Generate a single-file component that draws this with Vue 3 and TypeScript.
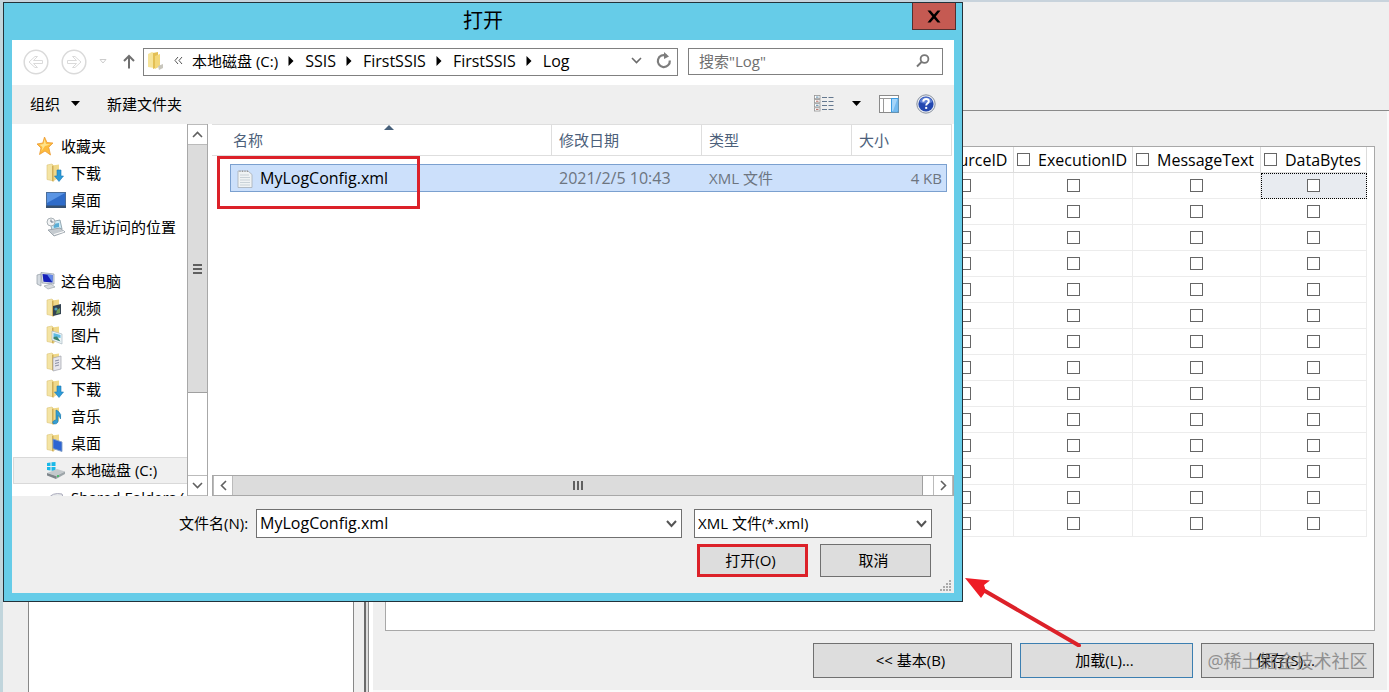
<script setup lang="ts">
import { ref } from 'vue'

interface NavItem {
  label: string
  icon: string
  root?: boolean
  spaced?: boolean
  selected?: boolean
}

const navItems: NavItem[] = [
  { label: '收藏夹', icon: 'star', root: true },
  { label: '下载', icon: 'download' },
  { label: '桌面', icon: 'desktop' },
  { label: '最近访问的位置', icon: 'recent' },
  { label: '这台电脑', icon: 'pc', root: true, spaced: true },
  { label: '视频', icon: 'video' },
  { label: '图片', icon: 'picture' },
  { label: '文档', icon: 'document' },
  { label: '下载', icon: 'download' },
  { label: '音乐', icon: 'music' },
  { label: '桌面', icon: 'deskfolder' },
  { label: '本地磁盘 (C:)', icon: 'drive', selected: true },
  { label: 'Shared Folders (', icon: 'net' },
]
const folderIcons = ['download', 'video', 'picture', 'document', 'music', 'deskfolder']

const crumbs: string[] = ['本地磁盘 (C:)', 'SSIS', 'FirstSSIS', 'FirstSSIS', 'Log']
const logColumns: string[] = ['SourceID', 'ExecutionID', 'MessageText', 'DataBytes']
const logRows = 14

const fileName = ref('MyLogConfig.xml')
const search = ref('')
</script>

<template>
  <div class="screen">
    <main class="host">
      <header class="host-head"></header>
      <div class="host-body">
        <section class="tree"><div class="tree-box"></div></section>
        <div class="splitter"></div>
        <section class="details">
          <div class="grid-frame">
            <table class="log">
              <colgroup>
                <col class="c1" /><col class="c2" /><col class="c3" /><col class="c4" />
              </colgroup>
              <thead>
                <tr>
                  <th v-for="c in logColumns" :key="c">
                    <label><input type="checkbox" class="tick" /><span>{{ c }}</span></label>
                  </th>
                </tr>
              </thead>
              <tbody>
                <tr v-for="r in logRows" :key="r">
                  <td v-for="(c, i) in logColumns" :key="c" :class="{ current: r === 1 && i === 3 }">
                    <input type="checkbox" class="tick" :aria-label="c" />
                  </td>
                </tr>
              </tbody>
            </table>
          </div>
          <div class="actions">
            <button class="btn basic">&lt;&lt; 基本(B)</button>
            <button class="btn load">
              加载(L)...
              <svg class="arrow" width="120" height="76" viewBox="0 0 120 76">
                <path d="M23 20L117 74.500" stroke="#dc2129" stroke-width="4" stroke-linecap="round" />
                <path d="M3 7L28 9.500L22 14L24 20L19 27Z" fill="#ee1c25" />
              </svg>
            </button>
            <button class="btn save">保存(S)...<span class="mark">@稀土掘金技术社区</span></button>
          </div>
        </section>
      </div>
    </main>

    <section class="dialog" role="dialog" aria-labelledby="dlg-title">
      <header class="title">
        <h1 id="dlg-title">打开</h1>
        <button class="close" aria-label="关闭">
          <svg width="14" height="13" viewBox="0 0 14 13">
            <path d="M0.500 0.500H3.500L7 4.500L10.500 0.500H13.500L8.700 6.500L13.500 12.500H10.500L7 8.500L3.500 12.500H0.500L5.300 6.500Z" fill="#000" />
          </svg>
        </button>
      </header>

      <div class="client">
        <div class="nav-row">
          <button class="round" aria-label="后退">
            <svg width="26" height="26" viewBox="0 0 26 26" fill="none" stroke="#dadada">
              <circle cx="13" cy="13" r="11.800" stroke-width="1.500" />
              <path d="M6 13L12 7.500H14.500L10.500 11.500H19.500V14.500H10.500L14.500 18.500H12Z" />
            </svg>
          </button>
          <button class="round fwd" aria-label="前进">
            <svg width="26" height="26" viewBox="0 0 26 26" fill="none" stroke="#dadada">
              <circle cx="13" cy="13" r="11.800" stroke-width="1.500" />
              <path d="M20 13L14 7.500H11.500L15.500 11.500H6.500V14.500H15.500L11.500 18.500H14Z" />
            </svg>
          </button>
          <button class="hist" aria-label="最近的位置">
            <svg width="8" height="5" viewBox="0 0 8 5"><path d="M1 .5H7L4 4Z" fill="#fff" stroke="#ccc" /></svg>
          </button>
          <button class="up" aria-label="向上">
            <svg width="12" height="15" viewBox="0 0 12 15" fill="none" stroke="#707070" stroke-width="2">
              <path d="M6 14.500V2M1 7L6 2L11 7" />
            </svg>
          </button>
          <div class="address">
            <svg class="folder" width="18" height="20" viewBox="0 0 18 20">
              <path d="M1 3L5 1L7 2V17L1 16Z" fill="#f6e49a" />
              <path d="M6 2L11 1V16L6 18Z" fill="#e3bf54" />
              <path d="M8 5L13 3V15L8 18Z" fill="#f3d779" />
              <path d="M11 15L16 13V17L12 19Z" fill="#c8c6bd" />
            </svg>
            <svg class="more" width="9" height="9" viewBox="0 0 9 9" fill="none" stroke="#555">
              <path d="M4 1L1 4.500L4 8M8 1L5 4.500L8 8" />
            </svg>
            <template v-for="(c, i) in crumbs" :key="i">
              <svg v-if="i > 0" class="sep" width="6" height="10" viewBox="0 0 6 10"><path d="M.5 0L5.500 5L.5 10Z" /></svg>
              <a href="#" :class="{ latin: i > 0 }">{{ c }}</a>
            </template>
            <span class="grow"></span>
            <svg class="drop" width="11" height="7" viewBox="0 0 11 7" fill="none" stroke="#6b6b6b" stroke-width="1.600"><path d="M1 1L5.500 5.500L10 1" /></svg>
            <button class="refresh" aria-label="刷新">
              <svg width="16" height="17" viewBox="0 0 16 17" fill="none">
                <path d="M10.500 3.700A6 6 0 1 0 13.800 8.500" stroke="#7d7d7d" stroke-width="2.200" />
                <path d="M8 0V7L13 4.500Z" fill="#7d7d7d" />
              </svg>
            </button>
          </div>
          <label class="search">
            <input v-model="search" type="text" placeholder='搜索"Log"' aria-label="搜索" />
            <svg width="14" height="14" viewBox="0 0 14 14" fill="none" stroke="#777" stroke-width="2">
              <circle cx="8.500" cy="5" r="3.900" stroke-width="1.800" /><path d="M5.500 8L1 12.500" />
            </svg>
          </label>
        </div>

        <div class="toolbar">
          <button class="tool">组织<svg width="9" height="5" viewBox="0 0 9 5"><path d="M0 0H9L4.500 5Z" /></svg></button>
          <button class="tool">新建文件夹</button>
          <span class="grow"></span>
          <button class="tool" aria-label="更改视图">
            <svg width="20" height="17" viewBox="0 0 20 17">
              <g fill="#fff" stroke="#949494" stroke-width=".8">
                <rect x=".5" y=".5" width="5.500" height="3.200" /><rect x=".5" y="4.600" width="5.500" height="3.200" />
                <rect x=".5" y="8.700" width="5.500" height="3.200" /><rect x=".5" y="12.800" width="5.500" height="3.200" />
              </g>
              <path d="M2 2.100H4.500M2 10.300H4.500" stroke="#5b8aa8" /><path d="M2 6.200H4.500M2 14.400H4.500" stroke="#b46a60" />
              <path d="M8 2.500H13M14.500 2.500H19.500M8 6.500H13M14.500 6.500H19.500M8 10.500H13M14.500 10.500H19.500M8 14.500H13M14.500 14.500H19.500" stroke="#64788f" />
            </svg>
          </button>
          <button class="tool view-drop" aria-label="视图选项"><svg width="9" height="5" viewBox="0 0 9 5"><path d="M0 0H9L4.500 5Z" /></svg></button>
          <button class="tool pane" aria-label="预览窗格">
            <svg width="20" height="18" viewBox="0 0 20 18">
              <rect x=".5" y=".5" width="19" height="17" fill="#fff" stroke="#8a8a8a" />
              <path d="M1 3.500H19M4.500 3.500V17" stroke="#9a9a9a" />
              <rect x="12.500" y="3.500" width="6.500" height="13.500" fill="#a5d5fa" stroke="#3c9be0" />
              <path d="M14 16L18 5V16Z" fill="#74baf0" />
            </svg>
          </button>
          <button class="tool" aria-label="帮助">
            <svg width="20" height="20" viewBox="0 0 20 20">
              <circle cx="10" cy="10" r="9.200" fill="#e4e8ef" stroke="#8b93a0" />
              <circle cx="10" cy="10" r="7.600" fill="#2448b0" />
              <path d="M3.500 8A6.800 6.800 0 0 1 16.500 8Q10 11 3.500 8Z" fill="#5f80d6" />
              <path d="M7.200 7.600Q7.400 5 10.100 5Q12.800 5 12.800 7.300Q12.800 8.700 11.300 9.500Q10.200 10.200 10.200 11.500" fill="none" stroke="#fff" stroke-width="2" />
              <rect x="9.200" y="12.900" width="2" height="2" fill="#fff" />
            </svg>
          </button>
        </div>

        <div class="panes">
          <nav class="side">
            <ul>
              <li v-for="(n, i) in navItems" :key="i" :class="{ root: n.root, spaced: n.spaced, selected: n.selected }">
                <svg width="20" height="20" viewBox="0 0 20 20">
                  <g v-if="folderIcons.includes(n.icon)">
                    <path d="M1 2L6 1L8 3V18L1 16.500Z" fill="#f4e4a4" stroke="#dcc578" stroke-width=".6" />
                    <path d="M6 2.500L13 1.500V15L6 18.500Z" fill="#f0d888" />
                    <path d="M6 2.500L7.500 3V18.500L6 18Z" fill="#cfae58" />
                  </g>
                  <path v-if="n.icon === 'star'" d="M8.500 1L11 6.500L17 7L12.700 11.300L14.500 19L9 15L3.500 18.500L5 12L1 8L6.800 7Z" fill="#fdbb3c" stroke="#eb9a35" stroke-width=".8" />
                  <path v-if="n.icon === 'star'" d="M8.500 3L10 8L14.500 8.500L9 10L5.500 15L6.500 11L3.500 8.700L7.500 8Z" fill="#ffe48c" />
                  <path v-if="n.icon === 'download'" d="M11 7H15V13H17.500L13 18.500L8.500 13H11Z" fill="#2c9bd8" stroke="#1d78b4" stroke-width=".6" />
                  <g v-if="n.icon === 'desktop'">
                    <rect x=".5" y="2.500" width="19" height="15" fill="#2f6cc9" stroke="#4a6d9a" />
                    <path d="M1 3H19L1 13Z" fill="#5b95e4" /><rect x="0" y="15.500" width="20" height="2.500" fill="#36506f" />
                  </g>
                  <g v-if="n.icon === 'recent'">
                    <path d="M4 5L14 3L16 12L6 13Z" fill="#cdeaf5" stroke="#98aab4" />
                    <path d="M7 7L13 6L13 10L8 11Z" fill="#58acd4" />
                    <circle cx="5" cy="5" r="4" fill="#f2f4f5" stroke="#a9b1b6" /><path d="M5 2.500V5H7.500" fill="none" stroke="#678" />
                    <path d="M2 13L14 11L19 15L8 19Z" fill="#c5cbd0" stroke="#87919a" stroke-width=".7" /><path d="M8 17.500L18 14.500" stroke="#fff" />
                  </g>
                  <g v-if="n.icon === 'pc'">
                    <path d="M1 4L5 3V15L1 13Z" fill="#d5dbe1" stroke="#929ca5" stroke-width=".7" />
                    <path d="M5 1.500L18 3V13L6 12Z" fill="#dbe0e6" stroke="#8b97a4" stroke-width=".7" />
                    <path d="M6.500 3L16.500 4V11.500L7.500 10.800Z" fill="#1520b9" /><path d="M11 3.500L16.500 4V11.500Z" fill="#628aea" />
                    <path d="M8 15L15 13L19 16L12 18Z" fill="#d8dcdf" stroke="#9fa7ad" stroke-width=".7" />
                  </g>
                  <g v-if="n.icon === 'video'">
                    <path d="M7 8L15 6V16L7 18Z" fill="#334351" /><circle cx="10" cy="11" r="1.600" fill="#4ca3bd" /><path d="M11 12L14 10V15L10 16Z" fill="#729c58" />
                  </g>
                  <g v-if="n.icon === 'picture'">
                    <path d="M6 6L16 9V19L6 15Z" fill="#edf5f8" stroke="#a9b9c1" stroke-width=".7" /><path d="M7.500 8L14.500 10V13L7.500 12Z" fill="#5dbbe3" /><path d="M7.500 12L11 11.500L14.500 16.500L7.500 14Z" fill="#39846f" />
                  </g>
                  <g v-if="n.icon === 'document'">
                    <path d="M7 6L15 4V17L7 19Z" fill="#e7e6eb" stroke="#9fa1aa" stroke-width=".7" /><path d="M9 9L13 8M9 11.500L13 10.500M9 14L13 13" stroke="#8a8fa2" />
                  </g>
                  <path v-if="n.icon === 'music'" d="M10 4L12 5Q16 8 14.500 13Q14 11 12 9.500V16Q11 18.500 7.500 18Q5.500 16 8 14.500L10 14Z" fill="#369ed2" stroke="#1d79ac" stroke-width=".6" />
                  <path v-if="n.icon === 'deskfolder'" d="M7 6L16 9V18.500L7 15.500Z" fill="#2e65d2" stroke="#849fc6" stroke-width=".9" />
                  <g v-if="n.icon === 'drive'">
                    <path d="M1 3L4.500 2.500V6H1ZM5.500 2.300L9.500 2V6H5.500ZM1 7H4.500V10.500L1 10ZM5.500 7H9.500V11L5.500 10.700Z" fill="#19b8e8" />
                    <path d="M1 13L11 9L19 11.500L10 16Z" fill="#c4c9cc" /><path d="M1 13L10 16V19L1 15.500Z" fill="#7d858a" /><path d="M10 16L19 11.500V14L10 19Z" fill="#9da5a9" /><circle cx="12" cy="16" r="1" fill="#39c15b" />
                  </g>
                  <path v-if="n.icon === 'net'" d="M2 12Q6 5 16 7Q18 10 16 14H3Z" fill="#e9ebec" stroke="#aab" />
                </svg>
                <span>{{ n.label }}</span>
              </li>
            </ul>
          </nav>
          <div class="vscroll">
            <button aria-label="向上滚动"><svg width="11" height="7" viewBox="0 0 11 7"><path d="M1 6L5.500 1.500L10 6" /></svg></button>
            <div class="vthumb"><i></i><i></i><i></i></div>
            <span class="grow"></span>
            <button aria-label="向下滚动"><svg width="11" height="7" viewBox="0 0 11 7"><path d="M1 1L5.500 5.500L10 1" /></svg></button>
          </div>

          <div class="list">
            <svg class="sort" width="10" height="5" viewBox="0 0 10 5"><path d="M0 5L5 0L10 5Z" fill="#47607a" /></svg>
            <table class="files">
              <colgroup><col /><col class="f2" /><col class="f2" /><col class="f3" /></colgroup>
              <thead>
                <tr><th>名称</th><th>修改日期</th><th>类型</th><th>大小</th></tr>
              </thead>
            </table>
            <table class="files rows">
              <colgroup><col /><col class="f2" /><col class="f2" /><col class="f4" /></colgroup>
              <tbody>
                <tr>
                  <td>
                    <span class="file latin">
                      <svg width="16" height="19" viewBox="0 0 16 19">
                        <path d="M1 2H11L15 5.500V18.500H1Z" fill="#f0f3f4" stroke="#a7afb8" stroke-width=".8" />
                        <path d="M3 1.500V3M5.500 1.500V3M8 1.500V3M10.500 1.500V3" stroke="#999" />
                        <path d="M3 6H12M3 8.500H13M3 11H13M3 13.500H13M3 16H13" stroke="#c9d2d8" />
                      </svg>MyLogConfig.xml
                    </span>
                  </td>
                  <td class="latin">2021/2/5 10:43</td>
                  <td>XML 文件</td>
                  <td>4 KB</td>
                </tr>
              </tbody>
            </table>
            <div class="callout"></div>
            <span class="grow"></span>
            <div class="hscroll">
              <button aria-label="向左滚动"><svg width="7" height="11" viewBox="0 0 7 11"><path d="M6 1L1.500 5.500L6 10" /></svg></button>
              <div class="hthumb"><i></i><i></i><i></i></div>
              <button aria-label="向右滚动"><svg width="7" height="11" viewBox="0 0 7 11"><path d="M1 1L5.500 5.500L1 10" /></svg></button>
            </div>
          </div>
        </div>

        <form class="foot" @submit.prevent>
          <div class="fields">
            <label for="fname">文件名(N):</label>
            <div class="combo name latin">
              <input id="fname" v-model="fileName" type="text" />
              <svg width="11" height="8" viewBox="0 0 11 8"><path d="M1 1L5.500 6L10 1" /></svg>
            </div>
            <div class="combo type">
              <select aria-label="文件类型"><option>XML 文件(*.xml)</option></select>
              <svg width="11" height="8" viewBox="0 0 11 8"><path d="M1 1L5.500 6L10 1" /></svg>
            </div>
          </div>
          <div class="choices">
            <button class="btn open" type="submit">打开(O)</button>
            <button class="btn" type="button">取消</button>
          </div>
          <svg class="grip" width="12" height="12" viewBox="0 0 12 12" fill="#aaa">
            <path d="M9 0h2v2h-2zM6 3h2v2h-2zM9 3h2v2h-2zM3 6h2v2h-2zM6 6h2v2h-2zM9 6h2v2h-2zM0 9h2v2h-2zM3 9h2v2h-2zM6 9h2v2h-2zM9 9h2v2h-2z" />
          </svg>
        </form>
      </div>
    </section>
  </div>
</template>

<style>
body { margin: 0; }
</style>

<style scoped>
* { box-sizing: border-box; }
.screen {
  position: relative;
  min-height: 100vh;
  display: flex;
  overflow: hidden;
  color: #000;
  font: 15px/20px "Open Sans", "Noto Sans CJK SC", sans-serif;
}
button, input, select { font: inherit; color: inherit; margin: 0; }
button { padding: 0; border: 0; background: none; }
svg { flex: none; display: block; }
ul { list-style: none; margin: 0; padding: 0; }
.grow { flex: 1; }
.latin { font-size: 16px; }

.host {
  flex: 1;
  display: flex;
  flex-direction: column;
  border-left: 3px solid #c1d5dc;
  border-top: 2px solid #c8d3dc;
  background: #efefef;
}
.host-head { height: 109px; border-bottom: 1px solid #8a8a8a; }
.host-body { flex: 1; display: grid; grid-template-columns: 361px 9px 1fr; }
.tree { display: flex; padding: 0 10px 0 25px; }
.tree-box { flex: 1; background: #fff; border: solid #888; border-width: 0 1px; }
.splitter { border-left: 2px solid #6b6b6b; border-right: 4px solid #fff; background: linear-gradient(90deg, #ddd 2px, #888 2px); }
.details {
  display: flex;
  flex-direction: column;
  gap: 12px;
  padding: 35px 12px 12px;
  border-right: 2px solid #fafafa;
  border-bottom: 2px solid #fafafa;
}
.grid-frame { flex: 1; background: #fff; border: 1px solid #a8a8a8; padding-right: 7px; }
.log { margin-left: auto; border-collapse: separate; border-spacing: 0; table-layout: fixed; width: 451px; }
.c1 { width: 98px; }
.c2 { width: 119px; }
.c3 { width: 128px; }
.c4 { width: 106px; }
.log th { height: 26px; padding: 0; font-size: 16px; font-weight: 400; border-right: 1px solid #dcdcdc; border-bottom: 1px solid #dcdcdc; }
.log label { display: flex; align-items: center; gap: 8px; padding-left: 3px; }
.log td { height: 26px; padding: 0; border-right: 1px solid #ececec; border-bottom: 1px solid #ececec; }
.log td.current { background: #e8ebf0; outline: 1px dotted #000; outline-offset: -1px; }
.tick { appearance: none; display: block; flex: none; width: 13px; height: 13px; border: 1px solid #666; background: #fff; }
.log td .tick { margin: 0 auto; }
.actions { display: flex; justify-content: flex-end; gap: 8px; padding-right: 1px; }
.btn { position: relative; height: 35px; padding: 0 4px 2px 0; background: #ddd; border: 1px solid #707070; }
.basic { width: 199px; }
.load, .save { width: 173px; }
.load { border-color: #3c7fb1; }
.arrow { position: absolute; right: 110px; bottom: 30px; }
.mark { position: absolute; inset: 7px 0 auto; color: #777; opacity: .75; font-size: 18px; white-space: nowrap; }

.dialog {
  position: absolute;
  left: 3px;
  top: 2px;
  width: calc(100% - 429px);
  border: 1px solid #23323a;
  background: #66cce8;
  padding: 0 8px 8px;
}
.title { display: flex; justify-content: center; height: 37px; }
.title h1 { margin: 0; font-size: 20px; line-height: 36px; font-weight: 400; }
.close {
  position: absolute;
  top: 0;
  right: 6px;
  width: 44px;
  height: 27px;
  display: grid;
  place-items: center;
  background: #c55a52;
  border: 1px solid #53302f;
  border-top: 0;
}
.client { background: #efefef; }
.nav-row { display: flex; align-items: center; height: 45px; padding: 0 11px 2px; background: #fff; }
.fwd { margin-left: 12px; }
.hist { margin-left: 12px; }
.up { margin: 0 8px 0 16px; }
.address { flex: 1; display: flex; align-items: center; height: 28px; border: 1px solid #808080; white-space: nowrap; padding: 0 0 2px 3px; }
.more { margin: 0 9px 0 9px; }
.sep { margin: 0 11px 0 10px; }
.address a { color: #000; text-decoration: none; }
.refresh { margin: 0 5px 0 14px; }
.search { display: flex; align-items: center; width: 255px; height: 27px; margin-left: 10px; padding: 0 12px 2px 10px; border: 1px solid #808080; }
.search input { flex: 1; min-width: 0; padding: 0; border: 0; outline: 0; background: none; }
.search input::placeholder { color: #707070; opacity: 1; }
.toolbar { display: flex; align-items: center; height: 39px; padding: 0 18px 2px; }
.tool { display: flex; align-items: center; gap: 11px; }
.tool:first-child { margin-right: 27px; }
.view-drop { margin: 0 18px; }
.pane { margin-right: 17px; }

.panes { display: flex; height: 372px; background: #fff; }
.side { width: 175px; padding-top: 9px; overflow: hidden; }
.side li { display: flex; align-items: center; gap: 5px; height: 27px; margin-left: 1px; padding: 0 0 2px 32px; white-space: nowrap; border: 1px solid transparent; border-width: 1px 0 1px 1px; }
.side .root { padding-left: 22px; }
.side .spaced { margin-top: 27px; }
.side .selected { background: #f0f0f0; border-color: #d9d9d9; }
.vscroll { display: flex; flex-direction: column; width: 21px; border: solid #a8a8a8; border-width: 0 1px; }
.vscroll button, .hscroll button { display: grid; place-items: center; background: #fff; border: 1px solid #bbb; }
.vscroll button { height: 21px; border-left: 0; border-right: 0; }
.vscroll path, .hscroll path { fill: none; stroke: #606060; stroke-width: 1.6; }
.vthumb { display: flex; flex-direction: column; align-items: center; justify-content: center; gap: 2px; height: 248px; background: #dcdcdc; border-bottom: 1px solid #a0a0a0; }
.vthumb i { width: 9px; height: 2px; background: #606060; }
.list { position: relative; flex: 1; display: flex; flex-direction: column; margin-left: 4px; }
.sort { position: absolute; left: 172px; top: 1px; }
.files { width: calc(100% - 2px); table-layout: fixed; border-collapse: separate; border-spacing: 0; }
.f2 { width: 150px; }
.f3 { width: 100px; }
.f4 { width: 94px; }
.files th { height: 32px; padding: 0 0 0 7px; text-align: left; font-weight: 400; color: #4c607a; border: solid #dedede; border-width: 1px 1px 1px 0; }
.files th:first-child { padding-left: 21px; }
.rows { width: auto; margin: 8px 7px 0 18px; background: #cce0fb; border: 1px solid #7ba0cf; }
.rows td { height: 26px; padding: 0 0 0 7px; color: #6d7580; }
.rows td:first-child { padding: 0; color: #000; }
.rows td:last-child { text-align: right; padding-right: 4px; }
.file { display: flex; align-items: center; gap: 7px; padding-left: 6px; }
.callout { position: absolute; left: 5px; top: 32px; width: 203px; height: 53px; border: 3px solid #dc2129; }
.hscroll { display: flex; height: 21px; border: 1px solid #a8a8a8; }
.hscroll button { width: 20px; border-width: 0 1px; }
.hthumb { flex: 1; display: flex; align-items: center; justify-content: center; gap: 2px; margin-right: 10px; background: #dcdcdc; border-right: 1px solid #a0a0a0; }
.hthumb i { width: 2px; height: 9px; background: #606060; }

.foot { position: relative; padding: 13px 22px 16px 0; }
.fields, .choices { display: flex; justify-content: flex-end; }
.fields { align-items: center; gap: 12px; }
.fields label { margin: 0 -4px 0 167px; padding-bottom: 2px; white-space: nowrap; }
.combo { position: relative; height: 29px; background: #fff; border: 1px solid #707070; }
.combo input, .combo select { display: block; appearance: none; width: 100%; height: 100%; padding: 0 24px 2px 3px; border: 0; outline: 0; background: none; border-radius: 0; }
.combo svg { position: absolute; right: 4px; top: 10px; pointer-events: none; }
.combo path { fill: none; stroke: #555; stroke-width: 2; }
.name { flex: 1; }
.type { width: 238px; }
.choices { gap: 12px; margin-top: 6px; padding-right: 1px; }
.choices .btn { width: 111px; height: 33px; }
.choices .open { border: 3px solid #dc2129; }
.grip { position: absolute; right: 2px; bottom: 1px; }
</style>
